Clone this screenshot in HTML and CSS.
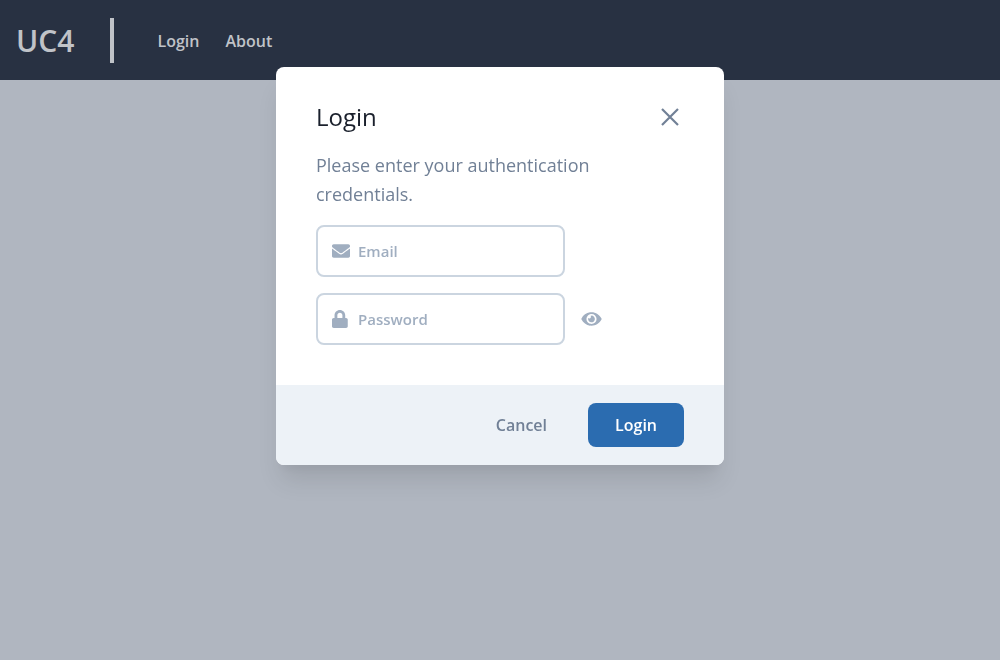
FILE: index.html
```html
<!DOCTYPE html>
<html lang="en">
<head>
<meta charset="utf-8">
<meta name="viewport" content="width=device-width, initial-scale=1">
<title>UC4</title>
<link rel="stylesheet" href="styles.css">
</head>
<body>
<header class="navbar">
  <span class="brand">UC4</span>
  <nav class="nav-links">
    <a href="#login">Login</a>
    <a href="#about">About</a>
  </nav>
</header>
<div class="overlay">
  <form class="modal" role="dialog" aria-labelledby="modal-title">
    <div class="modal-body">
      <div class="modal-head">
        <h1 class="modal-title" id="modal-title">Login</h1>
        <button class="close" type="button" aria-label="Close">
          <svg width="18" height="18" viewBox="0 0 18 18"><path d="M1 1L17 17M17 1L1 17" fill="none" stroke="currentColor" stroke-width="2.2"/></svg>
        </button>
      </div>
      <p class="intro">Please enter your authentication credentials.</p>
      <div class="row">
        <label class="field">
          <svg class="icon" width="18" height="18" viewBox="0 0 512 512" aria-hidden="true"><path fill="currentColor" d="M502.300 190.800c3.900-3.100 9.700-.2 9.700 4.700V400c0 26.500-21.500 48-48 48H48c-26.500 0-48-21.500-48-48V195.600c0-5 5.700-7.800 9.700-4.700 22.400 17.400 52.100 39.500 154.100 113.600 21.100 15.400 56.700 47.800 92.200 47.600 35.700.3 72-32.800 92.300-47.600 102-74.100 131.600-96.300 154-113.700zM256 320c23.200.4 56.600-29.200 73.400-41.400 132.700-96.300 142.800-104.700 173.400-128.700 5.800-4.500 9.200-11.500 9.200-18.900v-19c0-26.500-21.500-48-48-48H48c-26.500 0-48 21.500-48 48v19c0 7.400 3.400 14.300 9.200 18.900 30.600 23.900 40.700 32.400 173.400 128.700 16.800 12.200 50.200 41.800 73.400 41.400z"/></svg>
          <input class="input" type="email" placeholder="Email" aria-label="Email">
        </label>
      </div>
      <div class="row">
        <label class="field">
          <svg class="icon" width="18" height="18" viewBox="0 0 512 512" aria-hidden="true"><path fill="currentColor" d="M400 224h-24v-72C376 68.200 307.800 0 224 0S72 68.200 72 152v72H48c-26.500 0-48 21.500-48 48v192c0 26.500 21.500 48 48 48h352c26.500 0 48-21.500 48-48V272c0-26.500-21.500-48-48-48zm-104 0H152v-72c0-39.700 32.300-72 72-72s72 32.300 72 72v72z"/></svg>
          <input class="input" type="password" placeholder="Password" aria-label="Password">
        </label>
        <button class="reveal" type="button" aria-label="Show password">
          <svg width="21" height="18" viewBox="0 0 576 512"><path fill="currentColor" d="M572.520 241.400C518.290 135.590 410.930 64 288 64S57.680 135.640 3.480 241.410a32.350 32.350 0 0 0 0 29.190C57.710 376.410 165.070 448 288 448s230.320-71.640 284.520-177.410a32.350 32.350 0 0 0 0-29.190zM288 400a144 144 0 1 1 144-144 143.930 143.930 0 0 1-144 144zm0-240a95.310 95.310 0 0 0-25.310 3.790 47.850 47.850 0 0 1-66.900 66.900A95.780 95.780 0 1 0 288 160z"/></svg>
        </button>
      </div>
    </div>
    <div class="modal-foot">
      <button class="btn" type="button">Cancel</button>
      <button class="btn btn-primary" type="submit">Login</button>
    </div>
  </form>
</div>
</body>
</html>
```
FILE: styles.css
```css
*, *::before, *::after { box-sizing: border-box; }
body {
  margin: 0;
  min-height: 100vh;
  background: #b0b6c0;
  font-family: "Open Sans", "Noto Sans", sans-serif;
  font-size: 16px;
  line-height: 24px;
}
button, input { font: inherit; }
svg { display: block; }
button {
  border: 0;
  background: none;
  padding: 0;
  cursor: pointer;
}
.navbar {
  display: flex;
  align-items: center;
  min-height: 80px;
  padding: 0 16px;
  background: #283142;
  color: #c0c3c8;
}
.brand {
  padding-right: 36px;
  border-right: 4px solid #c0c3c8;
  font-size: 30px;
  font-weight: 600;
  line-height: 45px;
}
.nav-links {
  display: flex;
  gap: 26px;
  margin-left: 43px;
  padding-top: 2px;
  font-size: 16px;
  font-weight: 600;
}
.nav-links a {
  color: inherit;
  text-decoration: none;
}
.overlay {
  position: fixed;
  inset: 0;
  display: flex;
  justify-content: center;
  align-items: flex-start;
  padding: 67px 16px 16px;
}
.modal {
  width: 100%;
  max-width: 448px;
  overflow: hidden;
  border-radius: 8px;
  background: #fff;
  box-shadow: 0 20px 25px -5px rgba(0, 0, 0, .1), 0 10px 10px -5px rgba(0, 0, 0, .04);
}
.modal-body { padding: 32px 40px 40px; }
.modal-head {
  display: flex;
  justify-content: space-between;
  align-items: center;
  padding-right: 5px;
}
.modal-title {
  margin: 0;
  color: #1a202c;
  font-size: 24px;
  font-weight: 400;
  line-height: 36px;
}
.close { color: #718096; }
.intro {
  max-width: 300px;
  margin: 16px 0 0;
  color: #718096;
  font-size: 18px;
  font-weight: 400;
  line-height: 29px;
}
.row {
  display: flex;
  align-items: center;
  gap: 16px;
  margin-top: 16px;
}
.field {
  display: flex;
  align-items: center;
  width: 249px;
  height: 52px;
  padding: 0 14px;
  border: 2px solid #cbd5e0;
  border-radius: 8px;
  color: #a0aec0;
}
.field:focus-within { border-color: #2b6cb0; }
.icon { flex: none; }
.input {
  flex: 1;
  min-width: 0;
  margin-left: 8px;
  padding: 0;
  border: 0;
  outline: 0;
  background: none;
  color: #4a5568;
  font-size: 15px;
  font-weight: 600;
}
.input::placeholder {
  color: #a0aec0;
  opacity: 1;
}
.reveal { color: #a0aec0; }
.modal-foot {
  display: flex;
  justify-content: flex-end;
  align-items: center;
  gap: 14px;
  min-height: 80px;
  padding: 16px 40px;
  background: #edf2f7;
}
.btn {
  padding: 10px 27px;
  border-radius: 8px;
  color: #718096;
  font-size: 16px;
  font-weight: 600;
}
.btn-primary {
  background: #2b6cb0;
  color: #fff;
}
```
